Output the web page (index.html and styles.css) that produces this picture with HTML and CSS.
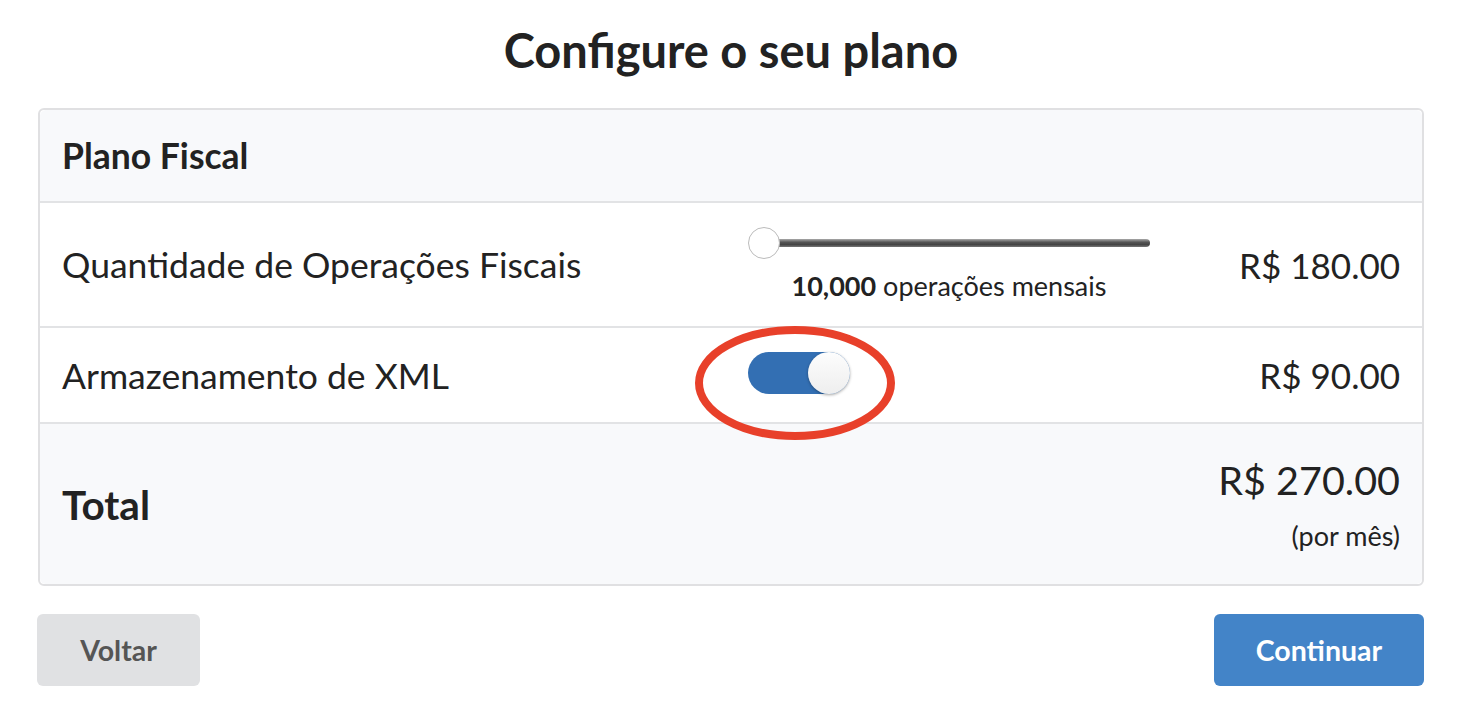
FILE: index.html
```html
<!DOCTYPE html>
<html lang="pt">
<head>
<meta charset="utf-8">
<link rel="stylesheet" href="styles.css">
</head>
<body>
<div class="page">
  <h1 class="title">Configure o seu plano</h1>
  <div class="card">
    <div class="card-header">Plano Fiscal</div>
    <div class="row row-ops">
      <div class="label">Quantidade de Operações Fiscais</div>
      <div class="control">
        <div class="slider">
          <div class="track"></div>
          <div class="knob"></div>
        </div>
        <div class="ops-text"><b>10,000</b> operações mensais</div>
      </div>
      <div class="price">R$ 180.00</div>
    </div>
    <div class="row row-xml">
      <div class="label">Armazenamento de XML</div>
      <div class="control control-toggle">
        <div class="toggle"><div class="toggle-knob"></div></div>
        <svg class="circle-mark" width="210" height="124" viewBox="0 0 210 124">
          <ellipse cx="105" cy="62" rx="96" ry="53" fill="none" stroke="#e8402a" stroke-width="8"/>
        </svg>
      </div>
      <div class="price">R$ 90.00</div>
    </div>
    <div class="row row-total">
      <div class="total-label">Total</div>
      <div class="total-price">
        <div class="total-amount">R$ 270.00</div>
        <div class="per-month">(por mês)</div>
      </div>
    </div>
  </div>
  <div class="actions">
    <button class="btn btn-back">Voltar</button>
    <button class="btn btn-next">Continuar</button>
  </div>
</div>
</body>
</html>
```

FILE: styles.css
```css
* { box-sizing: border-box; }
html, body { margin: 0; padding: 0; background: #fff; }
body {
  font-family: Lato, "Open Sans", "Liberation Sans", sans-serif;
  color: #222;
}
.page {
  padding: 22px 50px 0 38px;
}
.title {
  margin: 0 0 30px 0;
  text-align: center;
  font-size: 47px;
  font-weight: 700;
  line-height: 56px;
  color: #222;
}
.card {
  border: 2px solid #e0e0e2;
  border-radius: 6px;
}
.card-header {
  height: 93px;
  background: #f8f9fb;
  border-bottom: 2px solid #e2e3e5;
  padding: 0 22px;
  display: flex;
  align-items: center;
  font-size: 35.5px;
  font-weight: 700;
  border-radius: 6px 6px 0 0;
}
.row {
  display: grid;
  grid-template-columns: 686px 402px 1fr;
  align-items: center;
  padding: 0 22px;
  border-bottom: 2px solid #e2e3e5;
}
.row-ops { height: 125px; }
.row-xml { height: 96px; }
.label {
  font-size: 35.5px;
  color: #222;
}
.price {
  text-align: right;
  font-size: 35px;
  color: #222;
}
.control {
  display: flex;
  flex-direction: column;
  align-items: center;
}
.slider {
  position: relative;
  width: 402px;
  height: 32px;
  display: flex;
  align-items: center;
}
.track {
  margin-left: 15px;
  flex: 1;
  height: 8px;
  border-radius: 4px;
  background: linear-gradient(#aaa 0%, #555 40%, #444 70%, #777 100%);
}
.knob {
  position: absolute;
  left: 0;
  top: 0;
  width: 32px;
  height: 32px;
  border-radius: 50%;
  background: #fff;
  border: 1px solid #bbb;
}
.ops-text {
  margin-top: 10px;
  font-size: 27px;
  color: #222;
}
.ops-text b { font-weight: 700; }
.control-toggle {
  position: relative;
  align-items: flex-start;
}
.toggle {
  width: 102px;
  height: 42px;
  border-radius: 21px;
  background: #336fb3;
  position: relative;
  margin-top: -4px;
}
.toggle-knob {
  position: absolute;
  right: 0;
  top: 0;
  width: 42px;
  height: 42px;
  border-radius: 50%;
  background: linear-gradient(#fdfdfd, #eee);
  box-shadow: 0 1px 3px rgba(0,0,0,0.35);
}
.circle-mark {
  position: absolute;
  left: -58px;
  top: -35px;
}
.row-total {
  display: flex;
  justify-content: space-between;
  align-items: center;
  height: 160px;
  background: #f8f9fb;
  border-bottom: none;
  border-radius: 0 0 6px 6px;
}
.total-label {
  font-size: 40.5px;
  font-weight: 700;
}
.total-price {
  text-align: right;
}
.total-amount {
  font-size: 39.5px;
  line-height: 46px;
}
.per-month {
  margin-top: 16px;
  font-size: 27px;
}
.actions {
  display: flex;
  justify-content: space-between;
  margin-top: 28px;
}
.btn {
  font-family: inherit;
  border: none;
  border-radius: 6px;
  height: 72px;
  font-size: 28.5px;
  font-weight: 700;
  cursor: pointer;
}
.btn-back {
  width: 163px;
  background: #e0e1e3;
  color: #555;
  margin-left: -1px;
}
.btn-next {
  width: 210px;
  background: #4384c8;
  color: #fff;
}
```
